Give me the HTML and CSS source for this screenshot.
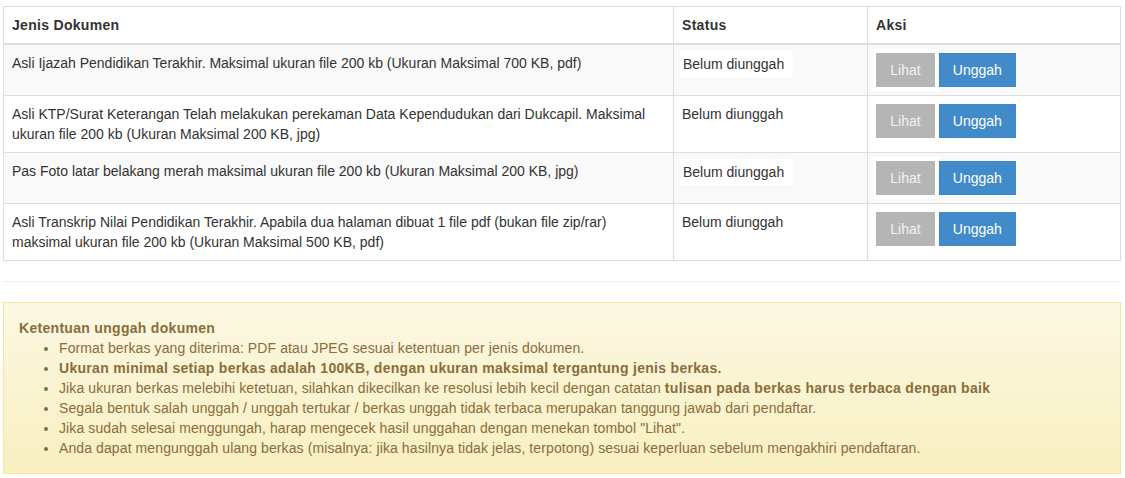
FILE: index.html
```html
<!DOCTYPE html>
<html lang="id">
<head>
    <meta charset="UTF-8">
    <meta name="viewport" content="width=device-width, initial-scale=1.0">
    <title>Unggah Dokumen</title>
    <link rel="stylesheet" href="styles.css">
</head>
<body>
    <div class="page">
        <table class="table">
            <thead>
                <tr>
                    <th class="col-doc">Jenis Dokumen</th>
                    <th class="col-status">Status</th>
                    <th>Aksi</th>
                </tr>
            </thead>
            <tbody>
                <tr class="striped">
                    <td>Asli Ijazah Pendidikan Terakhir. Maksimal ukuran file 200 kb (Ukuran Maksimal 700 KB, pdf)</td>
                    <td><span class="status boxed">Belum diunggah</span></td>
                    <td>
                        <span class="btn-wrap"><button class="btn lihat">Lihat</button></span>
                        <button class="btn unggah">Unggah</button>
                    </td>
                </tr>
                <tr>
                    <td>Asli KTP/Surat Keterangan Telah melakukan perekaman Data Kependudukan dari Dukcapil. Maksimal ukuran file 200 kb (Ukuran Maksimal 200 KB, jpg)</td>
                    <td><span class="status">Belum diunggah</span></td>
                    <td>
                        <button class="btn lihat">Lihat</button>
                        <button class="btn unggah">Unggah</button>
                    </td>
                </tr>
                <tr class="striped">
                    <td>Pas Foto latar belakang merah maksimal ukuran file 200 kb (Ukuran Maksimal 200 KB, jpg)</td>
                    <td><span class="status boxed">Belum diunggah</span></td>
                    <td>
                        <span class="btn-wrap"><button class="btn lihat">Lihat</button></span>
                        <button class="btn unggah">Unggah</button>
                    </td>
                </tr>
                <tr>
                    <td>Asli Transkrip Nilai Pendidikan Terakhir. Apabila dua halaman dibuat 1 file pdf (bukan file zip/rar) maksimal ukuran file 200 kb (Ukuran Maksimal 500 KB, pdf)</td>
                    <td><span class="status">Belum diunggah</span></td>
                    <td>
                        <button class="btn lihat">Lihat</button>
                        <button class="btn unggah">Unggah</button>
                    </td>
                </tr>
            </tbody>
        </table>

        <hr class="divider">

        <div class="alert">
            <b>Ketentuan unggah dokumen</b>
            <ul>
                <li>Format berkas yang diterima: PDF atau JPEG sesuai ketentuan per jenis dokumen.</li>
                <li><b>Ukuran minimal setiap berkas adalah 100KB, dengan ukuran maksimal tergantung jenis berkas.</b></li>
                <li>Jika ukuran berkas melebihi ketetuan, silahkan dikecilkan ke resolusi lebih kecil dengan catatan <b>tulisan pada berkas harus terbaca dengan baik</b></li>
                <li>Segala bentuk salah unggah / unggah tertukar / berkas unggah tidak terbaca merupakan tanggung jawab dari pendaftar.</li>
                <li>Jika sudah selesai menggungah, harap mengecek hasil unggahan dengan menekan tombol "Lihat".</li>
                <li>Anda dapat mengunggah ulang berkas (misalnya: jika hasilnya tidak jelas, terpotong) sesuai keperluan sebelum mengakhiri pendaftaran.</li>
            </ul>
        </div>
    </div>
</body>
</html>
```

FILE: styles.css
```css
* {
    box-sizing: border-box;
}

body {
    margin: 0;
    font-family: "Liberation Sans", Arial, sans-serif;
    font-size: 14px;
    line-height: 20px;
    color: #333;
    background: #fff;
}

b {
    letter-spacing: 0.3px;
}

.page {
    padding: 6px 4px 0 3px;
}

.table {
    width: 100%;
    border-collapse: collapse;
    border: 1px solid #ddd;
}

.table th,
.table td {
    padding: 8px;
    border: 1px solid #ddd;
    text-align: left;
    vertical-align: top;
}

.table th {
    font-weight: bold;
    letter-spacing: 0.3px;
    border-bottom: 2px solid #ddd;
}

.col-doc {
    width: 670px;
}

.col-status {
    width: 194px;
}

.table tr.striped td {
    background-color: #f9f9f9;
}

.status {
    display: inline-block;
}

.status.boxed {
    background: #fff;
    padding: 3px 9px 3px 3px;
    margin: -2px -9px -3px -2px;
}

.btn-wrap {
    display: inline-block;
    background: #fff;
    padding: 4px 3px 4px 3px;
    margin: -4px -3px -4px -3px;
    vertical-align: top;
}

.btn {
    display: inline-block;
    vertical-align: top;
    font-family: inherit;
    font-size: 14px;
    line-height: 20px;
    padding: 6px 12px;
    border: 1px solid transparent;
    border-radius: 0;
    cursor: pointer;
}

.btn.lihat {
    width: 59px;
    background-color: #b5b5b5;
    border-color: #b5b5b5;
    color: #f2f2f2;
}

.btn.unggah {
    width: 77px;
    background-color: #428bca;
    border-color: #3f88c8;
    color: #fff;
}

.divider {
    margin: 20px 0;
    border: 0;
    border-top: 1px solid #eee;
}

.alert {
    padding: 15px;
    border: 1px solid #f5e79e;
    background: linear-gradient(to bottom, #fcf8e3 0, #f8efc0 100%);
    color: #8a6d3b;
    letter-spacing: 0.1px;
}

.alert b {
    letter-spacing: 0.3px;
}

.alert ul {
    margin: 0;
    padding-left: 40px;
}
```
